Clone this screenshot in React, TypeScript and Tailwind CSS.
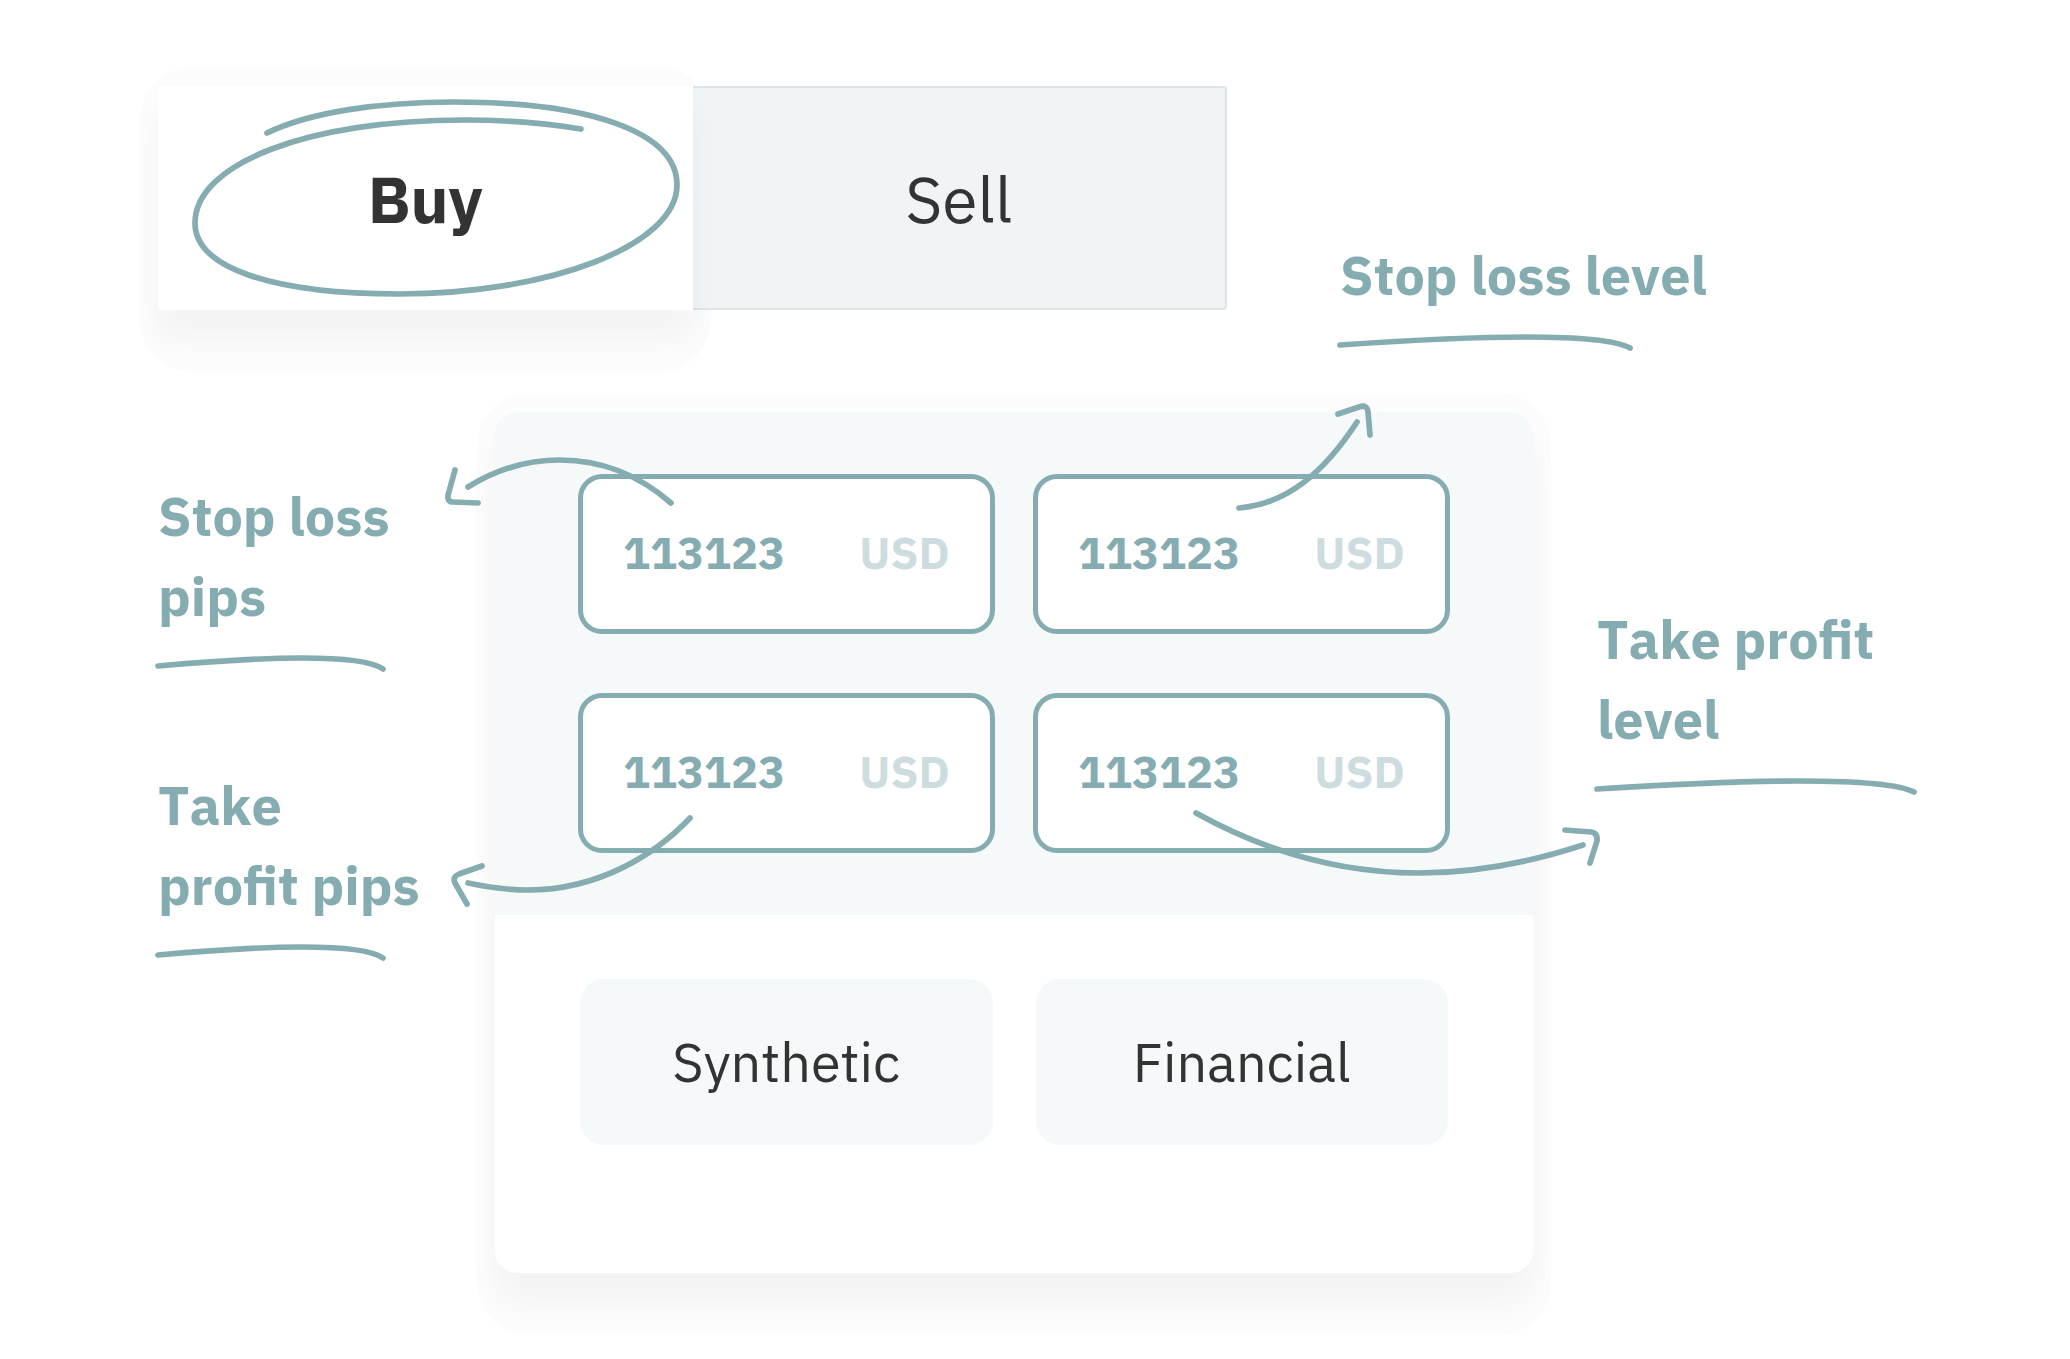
import { useState } from "react";
import type { ReactNode } from "react";

const STROKE = "#85acb0";

/* Hand-drawn line; coordinates share one drawing space, cropped by viewBox. */
function Sketch({ viewBox, paths, className }: { viewBox: string; paths: string[]; className: string }) {
  return (
    <svg
      aria-hidden="true"
      viewBox={viewBox}
      fill="none"
      stroke={STROKE}
      strokeWidth={5.7}
      strokeLinecap="round"
      strokeLinejoin="round"
      className={`pointer-events-none absolute max-w-none overflow-visible ${className}`}
    >
      {paths.map((d) => (
        <path key={d} d={d} />
      ))}
    </svg>
  );
}

function Callout({ children, line }: { children: ReactNode; line: string }) {
  return (
    <div>
      <p className="whitespace-nowrap text-[54px] leading-[80px] font-bold text-[#85acb0]">{children}</p>
      <svg
        aria-hidden="true"
        viewBox="0 0 100 18"
        preserveAspectRatio="none"
        fill="none"
        stroke={STROKE}
        strokeWidth={5.7}
        strokeLinecap="round"
        className={`mt-[18px] h-[18px] overflow-visible ${line}`}
      >
        <path vectorEffect="non-scaling-stroke" d="M0 12 C25 7 48 4 64 4 C82 4 95 7 100 15" />
      </svg>
    </div>
  );
}

function Halo() {
  return <span aria-hidden="true" className="absolute -inset-x-[18px] -top-[19px] -bottom-[62px] -z-10 rounded-[52px] bg-[#fcfcfc]" />;
}

function AmountField({ id, name, children }: { id: string; name: string; children: ReactNode }) {
  return (
    <div className="relative flex h-40 items-center rounded-3xl border-[5px] border-[#85acb0] bg-white pr-10 pb-0.5 pl-10 text-[45px] font-bold">
      <input
        id={id}
        aria-label={name}
        defaultValue="113123"
        inputMode="decimal"
        className="w-0 min-w-0 flex-1 bg-transparent text-[#85acb0] outline-none"
      />
      <label htmlFor={id} className="text-[#cddcde]">
        USD
      </label>
      {children}
    </div>
  );
}

export default function App() {
  const [side, setSide] = useState("Buy");

  return (
    <main className="isolate min-h-screen bg-white pt-[86px] pr-[156px] pb-20 pl-[158px] font-['IBM_Plex_Sans',Roboto,sans-serif] text-[#333333] [font-kerning:none]">
      <header className="flex items-start gap-[113px]">
        <div role="tablist" aria-label="Order side" className="grid h-56 min-w-0 flex-1 grid-cols-2">
          <div className="relative">
            <Halo />
            <button
              role="tab"
              aria-selected={side === "Buy"}
              onClick={() => setSide("Buy")}
              className="relative z-10 h-full w-full rounded-l bg-white pt-0.5 text-[64px] font-bold shadow-[0_28px_30px_2px_rgba(0,0,0,0.036)]"
            >
              Buy
            </button>
            <Sketch
              viewBox="190 96 492 204"
              className="top-[10px] left-8 z-20 h-[204px] w-[492px]"
              paths={[
                "M267 133 C310 112 380 102 454 102 C590 102 677 132 677 185 C677 245 550 294 399 294 C270 294 195 267 195 223 C195 163 310 120 464 120 C505 120 545 123 581 129",
              ]}
            />
          </div>
          <button
            role="tab"
            aria-selected={side === "Sell"}
            onClick={() => setSide("Sell")}
            className="rounded-r border-2 border-l-0 border-[#dde4e7] bg-[#f0f4f7] pt-0.5 text-[64px]"
          >
            Sell
          </button>
        </div>
        <div className="w-[574px] shrink-0 pt-[149px]">
          <Callout line="w-[290px]">Stop loss level</Callout>
        </div>
      </header>

      <div className="mt-[61px] grid grid-cols-[337px_minmax(0,1fr)_381px] items-start">
        <aside className="flex flex-col gap-[93px] pt-16">
          <Callout line="w-[225px]">
            Stop loss
            <br />
            pips
          </Callout>
          <Callout line="w-[225px]">
            Take
            <br />
            profit pips
          </Callout>
        </aside>

        <section aria-label="Order limits" className="relative z-10">
          <Halo />
          <div className="rounded-[22px] bg-white shadow-[0_28px_30px_2px_rgba(0,0,0,0.036)]">
            <div className="grid grid-cols-2 gap-x-[38px] gap-y-[59px] rounded-t-[22px] bg-[#f5f9fa] px-[83px] py-[62px]">
              <AmountField id="sl-pips" name="Stop loss pips">
                <Sketch
                  viewBox="440 450 240 60"
                  className="-top-[29px] -left-[143px] h-[60px] w-[240px]"
                  paths={["M468 487 C500 467 530 460 560 460 C603 460 640 476 671 503", "M455 470 L448 495 Q447 502 453 502 L478 503"]}
                />
              </AmountField>
              <AmountField id="sl-level" name="Stop loss level">
                <Sketch
                  viewBox="1230 400 145 115"
                  className="-top-[79px] left-[193px] h-[115px] w-[145px]"
                  paths={["M1238 508 C1285 504 1322 474 1356 422", "M1337 414 L1358 407 Q1366 404 1367 412 L1369 435"]}
                />
              </AmountField>
              <AmountField id="tp-pips" name="Take profit pips">
                <Sketch
                  viewBox="445 810 250 100"
                  className="top-[112px] -left-[138px] h-[100px] w-[250px]"
                  paths={["M690 818 C657 853 600 890 528 890 C508 890 487 887 468 883", "M482 866 L459 874 Q452 877 455 883 L467 904"]}
                />
              </AmountField>
              <AmountField id="tp-level" name="Take profit level">
                <Sketch
                  viewBox="1190 805 410 75"
                  className="top-[107px] left-[153px] h-[75px] w-[410px]"
                  paths={["M1195 813 C1267 853 1342 873 1418 873 C1475 873 1530 862 1582 845", "M1564 830 L1590 832 Q1597 833 1596 841 L1589 863"]}
                />
              </AmountField>
            </div>
            <div className="grid grid-cols-2 gap-x-[43px] px-[85px] pt-16 pb-32 text-[54px]">
              <button className="h-[166px] rounded-3xl bg-[#f5f9fa]">Synthetic</button>
              <button className="h-[166px] rounded-3xl bg-[#f5f9fa]">Financial</button>
            </div>
          </div>
        </section>

        <aside className="pt-[187px] pl-16">
          <Callout line="w-full">
            Take profit
            <br />
            level
          </Callout>
        </aside>
      </div>
    </main>
  );
}
